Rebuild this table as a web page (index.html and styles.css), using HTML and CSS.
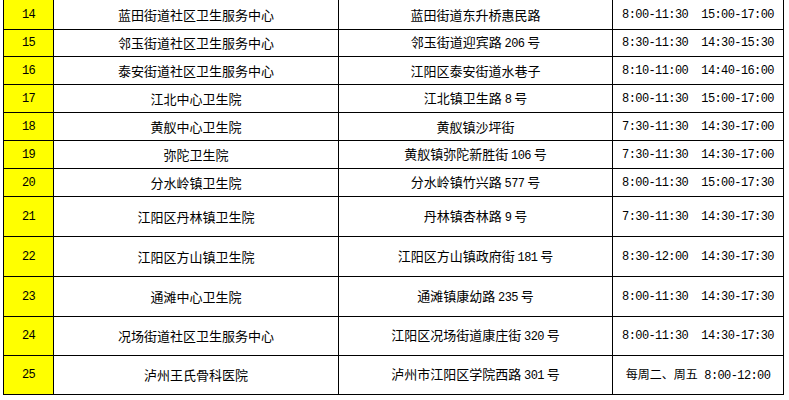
FILE: index.html
```html
<!DOCTYPE html>
<html lang="zh-CN">
<head>
<meta charset="utf-8">
<title>社区卫生服务中心</title>
<link rel="stylesheet" href="styles.css">
</head>
<body>
<table class="list">
  <colgroup>
    <col class="c-idx">
    <col class="c-name">
    <col class="c-addr">
    <col class="c-time">
  </colgroup>
  <tbody>
    <tr class="row-first"><td class="idx">14</td><td>蓝田街道社区卫生服务中心</td><td>蓝田街道东升桥惠民路</td><td class="time">8:00-11:30  15:00-17:00</td></tr>
    <tr class="row-second"><td class="idx">15</td><td>邻玉街道社区卫生服务中心</td><td>邻玉街道迎宾路 <span class="num">206</span> 号</td><td class="time">8:30-11:30  14:30-15:30</td></tr>
    <tr class="row-s"><td class="idx">16</td><td>泰安街道社区卫生服务中心</td><td>江阳区泰安街道水巷子</td><td class="time">8:10-11:00  14:40-16:00</td></tr>
    <tr class="row-s"><td class="idx">17</td><td>江北中心卫生院</td><td>江北镇卫生路 <span class="num">8</span> 号</td><td class="time">8:00-11:30  15:00-17:00</td></tr>
    <tr class="row-s"><td class="idx">18</td><td>黄舣中心卫生院</td><td>黄舣镇沙坪街</td><td class="time">7:30-11:30  14:30-17:00</td></tr>
    <tr class="row-s"><td class="idx">19</td><td>弥陀卫生院</td><td>黄舣镇弥陀新胜街 <span class="num">106</span> 号</td><td class="time">7:30-11:30  14:30-17:00</td></tr>
    <tr class="row-s"><td class="idx">20</td><td>分水岭镇卫生院</td><td>分水岭镇竹兴路 <span class="num">577</span> 号</td><td class="time">8:00-11:30  15:00-17:30</td></tr>
    <tr class="row-l"><td class="idx">21</td><td>江阳区丹林镇卫生院</td><td>丹林镇杏林路 <span class="num">9</span> 号</td><td class="time">7:30-11:30  14:30-17:30</td></tr>
    <tr class="row-l"><td class="idx">22</td><td>江阳区方山镇卫生院</td><td>江阳区方山镇政府街 <span class="num">181</span> 号</td><td class="time">8:30-12:00  14:30-17:30</td></tr>
    <tr class="row-l"><td class="idx">23</td><td>通滩中心卫生院</td><td>通滩镇康幼路 <span class="num">235</span> 号</td><td class="time">8:00-11:30  14:30-17:30</td></tr>
    <tr class="row-m"><td class="idx">24</td><td>况场街道社区卫生服务中心</td><td>江阳区况场街道康庄街 <span class="num">320</span> 号</td><td class="time">8:00-11:30  14:30-17:30</td></tr>
    <tr class="row-m"><td class="idx">25</td><td>泸州王氏骨科医院</td><td>泸州市江阳区学院西路 <span class="num">301</span> 号</td><td class="time"><span class="cn">每周二、周五</span> 8:00-12:00</td></tr>
  </tbody>
</table>
</body>
</html>
```

FILE: styles.css
```css
html, body {
  margin: 0;
  padding: 0;
  background: #ffffff;
}

.list {
  margin: -1px 0 0 3px;
  border-collapse: collapse;
  table-layout: fixed;
  width: 781px;
  font-family: "Noto Sans CJK SC", "Noto Sans", sans-serif;
  font-size: 13px;
  color: #000000;
}

.c-idx { width: 50px; }
.c-name { width: 285px; }
.c-addr { width: 274px; }
.c-time { width: 171px; }

.list td {
  border: 1px solid #000000;
  padding: 0;
  text-align: center;
  vertical-align: middle;
  line-height: 14px;
  white-space: nowrap;
  overflow: hidden;
}

.list td.idx {
  background: #ffff00;
  font-family: "Liberation Mono", "Noto Sans CJK SC", monospace;
  font-size: 12px;
  letter-spacing: -0.6px;
}

.list td.time {
  font-family: "Liberation Mono", "Noto Sans CJK SC", monospace;
  font-size: 12px;
  letter-spacing: -0.6px;
  white-space: pre;
}

.num {
  font-family: "Liberation Mono", monospace;
  font-size: 12px;
  letter-spacing: -0.6px;
}

.cn {
  font-family: "Noto Sans CJK SC", sans-serif;
  font-size: 12px;
  letter-spacing: 0;
}

.row-first { height: 30px; }
.row-second { height: 27px; }
.row-s { height: 28px; }
.row-l { height: 40px; }
.row-m { height: 39px; }
```
